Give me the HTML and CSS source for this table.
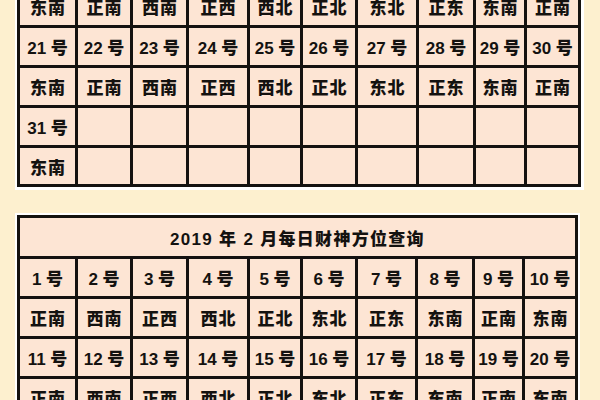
FILE: index.html
```html
<!DOCTYPE html>
<html lang="zh">
<head>
<meta charset="utf-8">
<title>2019年2月每日财神方位查询</title>
<link rel="stylesheet" href="styles.css">
</head>
<body>
<div class="page">
  <section class="frame frame-a">
    <div class="grid grid-a">
      <div class="cell dir">东南</div><div class="cell dir">正南</div><div class="cell dir">西南</div><div class="cell dir">正西</div><div class="cell dir">西北</div><div class="cell dir">正北</div><div class="cell dir">东北</div><div class="cell dir">正东</div><div class="cell dir">东南</div><div class="cell dir">正南</div>
      <div class="cell num">21 号</div><div class="cell num">22 号</div><div class="cell num">23 号</div><div class="cell num">24 号</div><div class="cell num">25 号</div><div class="cell num">26 号</div><div class="cell num">27 号</div><div class="cell num">28 号</div><div class="cell num">29 号</div><div class="cell num">30 号</div>
      <div class="cell dir">东南</div><div class="cell dir">正南</div><div class="cell dir">西南</div><div class="cell dir">正西</div><div class="cell dir">西北</div><div class="cell dir">正北</div><div class="cell dir">东北</div><div class="cell dir">正东</div><div class="cell dir">东南</div><div class="cell dir">正南</div>
      <div class="cell num">31 号</div><div class="cell"></div><div class="cell"></div><div class="cell"></div><div class="cell"></div><div class="cell"></div><div class="cell"></div><div class="cell"></div><div class="cell"></div><div class="cell"></div>
      <div class="cell dir">东南</div><div class="cell"></div><div class="cell"></div><div class="cell"></div><div class="cell"></div><div class="cell"></div><div class="cell"></div><div class="cell"></div><div class="cell"></div><div class="cell"></div>
    </div>
  </section>
  <section class="frame frame-b">
    <div class="grid grid-b">
      <div class="cell title">2019 年 2 月每日财神方位查询</div>
      <div class="cell num">1 号</div><div class="cell num">2 号</div><div class="cell num">3 号</div><div class="cell num">4 号</div><div class="cell num">5 号</div><div class="cell num">6 号</div><div class="cell num">7 号</div><div class="cell num">8 号</div><div class="cell num">9 号</div><div class="cell num">10 号</div>
      <div class="cell dir">正南</div><div class="cell dir">西南</div><div class="cell dir">正西</div><div class="cell dir">西北</div><div class="cell dir">正北</div><div class="cell dir">东北</div><div class="cell dir">正东</div><div class="cell dir">东南</div><div class="cell dir">正南</div><div class="cell dir">东南</div>
      <div class="cell num">11 号</div><div class="cell num">12 号</div><div class="cell num">13 号</div><div class="cell num">14 号</div><div class="cell num">15 号</div><div class="cell num">16 号</div><div class="cell num">17 号</div><div class="cell num">18 号</div><div class="cell num">19 号</div><div class="cell num">20 号</div>
      <div class="cell dir">正南</div><div class="cell dir">西南</div><div class="cell dir">正西</div><div class="cell dir">西北</div><div class="cell dir">正北</div><div class="cell dir">东北</div><div class="cell dir">正东</div><div class="cell dir">东南</div><div class="cell dir">正南</div><div class="cell dir">东南</div>
    </div>
  </section>
</div>
</body>
</html>
```

FILE: styles.css
```css
html, body {
  margin: 0;
  padding: 0;
  background: #fdf0cf;
  overflow: hidden;
}

.page {
  width: 600px;
  height: 400px;
  padding-left: 15px;
  box-sizing: border-box;
  overflow: hidden;
}

.frame {
  display: inline-block;
  vertical-align: top;
  background: #ffffff;
  padding: 2px;
}

.frame-a {
  margin-top: -17px;
  padding-bottom: 3px;
  padding-right: 3px;
}

.frame-b {
  margin-top: 23px;
  display: block;
  width: fit-content;
}

.grid {
  display: grid;
  background: #141210;
  padding: 3px;
  gap: 3px;
  font-family: "Liberation Sans", "Noto Sans CJK SC", sans-serif;
  font-weight: 900;
  color: #141210;
}

.grid-a {
  grid-template-columns: 55px 52px 53px 58px 50px 52px 58px 54px 48px 51px;
  grid-template-rows: 37px 37px 37px 37px 36px;
}

.grid-b {
  grid-template-columns: 55px 52px 53px 58px 50px 52px 57px 54px 47px 50px;
  grid-template-rows: 38px 37px 37px 37px 37px;
}

.cell {
  background: #fde5d4;
  display: flex;
  align-items: center;
  justify-content: center;
  white-space: nowrap;
}

.num {
  font-size: 17px;
}

.dir {
  font-size: 17px;
  letter-spacing: 1px;
  padding-left: 1px;
}

.title {
  grid-column: 1 / -1;
  font-size: 17px;
  letter-spacing: 1.3px;
}
```
